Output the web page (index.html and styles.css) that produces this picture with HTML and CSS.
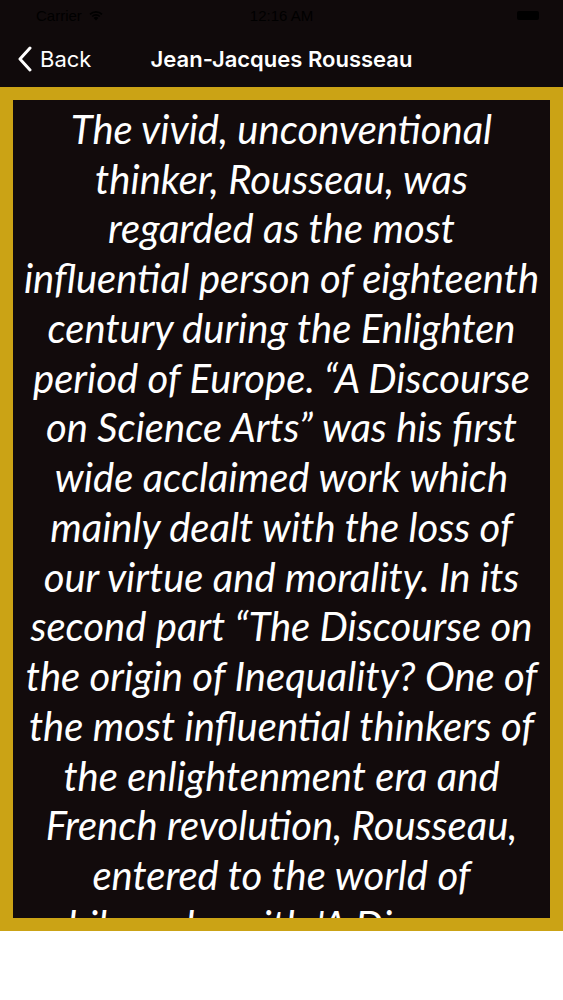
FILE: index.html
```html
<!DOCTYPE html>
<html>
<head>
<meta charset="utf-8">
<link rel="stylesheet" href="styles.css">
</head>
<body>
<div class="screen">
  <div class="status">
    <div class="status-left">Carrier
      <svg class="wifi" width="16" height="12" viewBox="0 0 16 12"><path d="M8 11.5 L5.6 8.9 A3.4 3.4 0 0 1 10.4 8.9 Z M3.6 6.9 A6.2 6.2 0 0 1 12.4 6.9 L11.2 8.1 A4.6 4.6 0 0 0 4.8 8.1 Z M1.4 4.7 A9.3 9.3 0 0 1 14.6 4.7 L13.4 5.9 A7.6 7.6 0 0 0 2.6 5.9 Z" fill="#000"/></svg>
    </div>
    <div class="status-time">12:16 AM</div>
    <div class="status-right"><span class="battery"></span></div>
  </div>
  <div class="nav">
    <div class="back">
      <svg width="16" height="26" viewBox="0 0 16 26"><path d="M13 2 L3 13 L13 24" fill="none" stroke="#fff" stroke-width="3" stroke-linecap="round" stroke-linejoin="round"/></svg>
      <span>Back</span>
    </div>
    <div class="title">Jean-Jacques Rousseau</div>
    <div></div>
  </div>
  <div class="frame">
    <p class="text">The vivid, unconventional<br>thinker, Rousseau, was<br>regarded as the most<br>influential person of eighteenth<br>century during the Enlighten<br>period of Europe. “A Discourse<br>on Science Arts” was his first<br>wide acclaimed work which<br>mainly dealt with the loss of<br>our virtue and morality. In its<br>second part “The Discourse on<br>the origin of Inequality? One of<br>the most influential thinkers of<br>the enlightenment era and<br>French revolution, Rousseau,<br>entered to the world of<br>philosophy with 'A Discourse</p>
  </div>
</div>
</body>
</html>
```
FILE: styles.css
```css
html, body { margin: 0; padding: 0; background: #fff; }
.screen { width: 563px; background: #100a0b; }
.status {
  height: 30px;
  display: grid;
  grid-template-columns: 1fr auto 1fr;
  align-items: center;
  font-family: "Liberation Sans", Arial, sans-serif;
  font-size: 15px;
  color: #000;
}
.status-left { padding-left: 36px; display: flex; align-items: center; gap: 6px; }
.status-time { text-align: center; }
.status-right { display: flex; justify-content: flex-end; padding-right: 24px; }
.battery { width: 22px; height: 9px; background: #000; border-radius: 2px; }
.nav {
  height: 57px;
  display: grid;
  grid-template-columns: 1fr auto 1fr;
  align-items: center;
  color: #fff;
}
.back {
  display: flex;
  align-items: center;
  gap: 7px;
  padding-left: 17px;
  font-family: "Inter", "Liberation Sans", sans-serif;
  font-size: 22px;
  font-weight: 400;
}
.title {
  font-family: "Inter", "Liberation Sans", sans-serif;
  font-size: 22px;
  font-weight: 600;
  text-align: center;
}
.frame {
  height: 818px;
  border: 13px solid #cba315;
  background: #120b0c;
  overflow: hidden;
}
.text {
  margin: 0;
  padding-top: 5px;
  text-align: center;
  white-space: nowrap;
  color: #fff;
  font-family: "Lato", "Open Sans", sans-serif;
  font-style: italic;
  font-size: 40px;
  line-height: 49.73px;
}
```
